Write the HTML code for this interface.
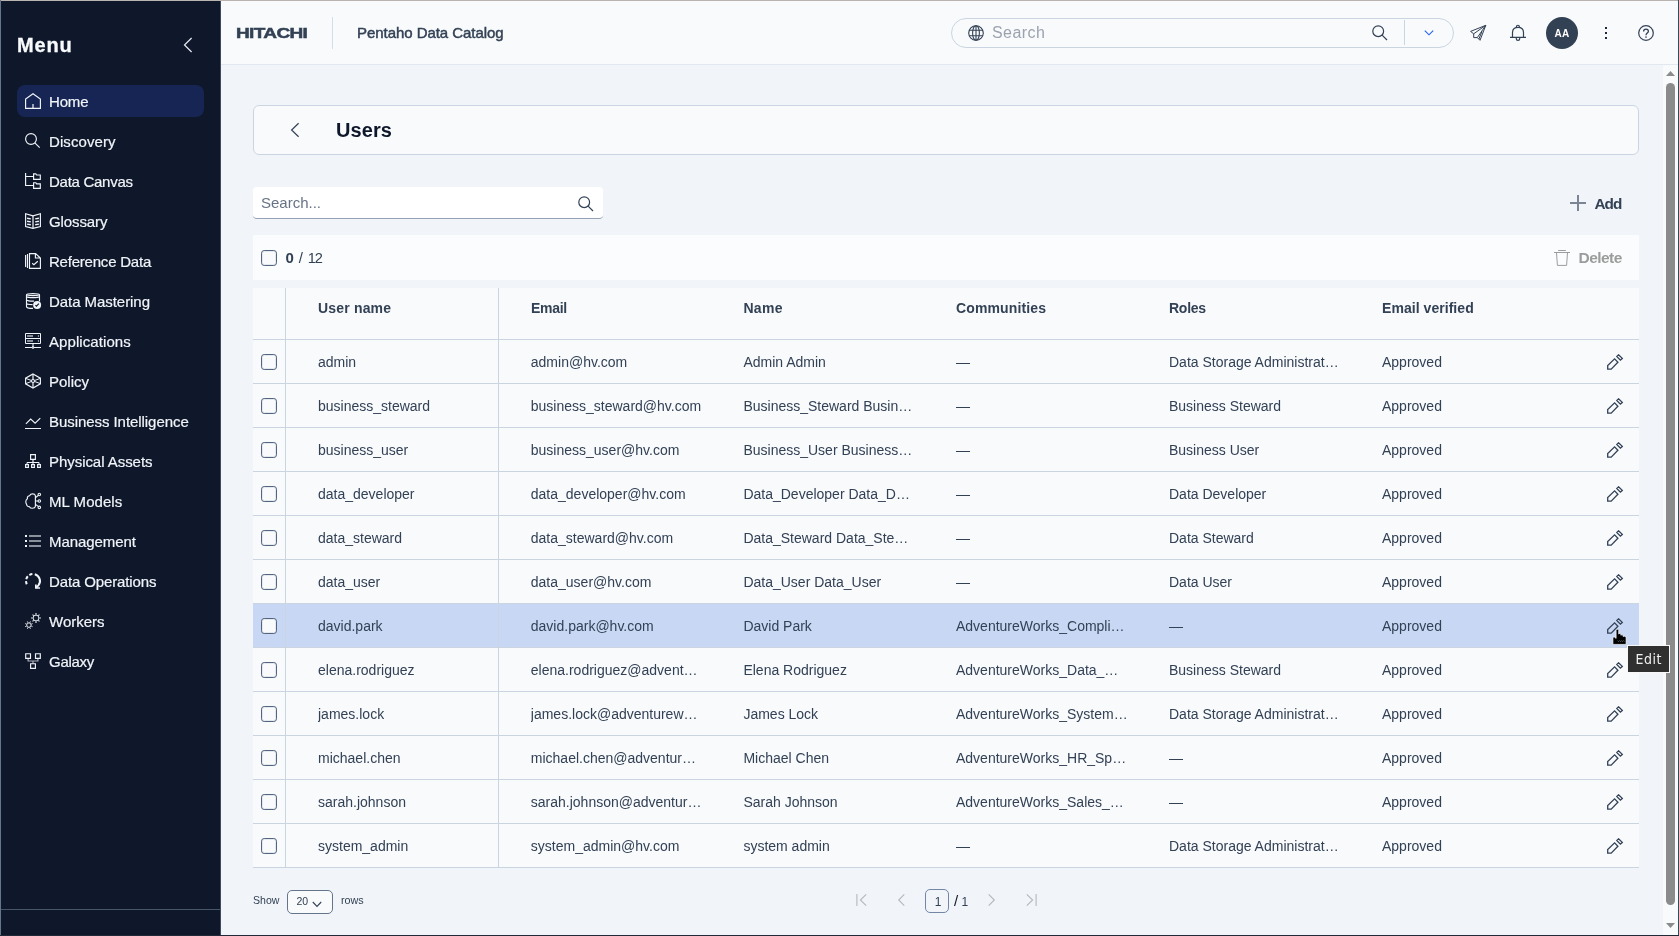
<!DOCTYPE html>
<html lang="en"><head><meta charset="utf-8"><title>Pentaho Data Catalog - Users</title>
<style>
*{box-sizing:border-box;margin:0;padding:0}
html,body{width:1679px;height:936px;overflow:hidden}
body{position:relative;will-change:transform;background:#f1f5f9;font-family:"Liberation Sans",sans-serif;color:#334155;font-size:14px}
.abs{position:absolute}
#side{position:absolute;z-index:2;left:0;top:0;width:220px;box-shadow:1px 0 0 #3d4a60;height:936px;background:#0f172a;color:#f1f5f9}
#menu{position:absolute;left:17px;top:31px;font-size:20px;font-weight:bold;color:#f8fafc;line-height:28px;letter-spacing:0.85px;-webkit-text-stroke:0.3px #f8fafc}
#collapse{position:absolute;left:180px;top:37px;color:#e2e8f0}
.nav{position:absolute;left:17px;width:187px;height:32px;border-radius:8px}
.nav.act{background:#172554}
.ni{position:absolute;left:8px;top:8px;width:16px;height:16px;color:#f1f5f9}
.ni svg{display:block;overflow:visible}
.nl{-webkit-text-stroke:0.2px #f1f5f9;position:absolute;left:32px;top:1px;line-height:32px;font-size:15px;color:#f1f5f9;white-space:nowrap}
#sideline{position:absolute;left:0;top:909px;width:220px;height:1px;background:#475569}
#top{position:absolute;left:220px;top:0;width:1459px;height:65px;background:#f8fafc;border-bottom:1px solid #e2e8f0}
#logo{position:absolute;left:16.3px;top:22px;font-size:14.8px;font-weight:bold;letter-spacing:-0.5px;color:#334155;line-height:22px;transform-origin:0 50%;transform:scaleX(1.285);-webkit-text-stroke:0.5px #334155}
#vdiv{position:absolute;left:112px;top:17px;width:1px;height:32px;background:#d5dde8}
#app{position:absolute;left:137px;top:22px;font-size:15px;line-height:22px;color:#334155;white-space:nowrap;letter-spacing:-0.05px;-webkit-text-stroke:0.45px #334155}
#gsearch{position:absolute;left:731px;top:18px;width:503px;height:30px;border:1px solid #cbd5e1;border-radius:15px;background:#f8fafc}
#gsearch .ph{position:absolute;left:40px;top:0;line-height:28px;font-size:16px;color:#9ca3af;letter-spacing:0.45px}
#gsearch .gl{position:absolute;left:16px;top:6px;color:#334155}
#gsearch .sr{position:absolute;left:420px;top:6px;color:#334155}
#gsearch .dv{position:absolute;left:452px;top:1px;width:1px;height:25px;background:#cbd5e1}
#gsearch .ch{position:absolute;left:472px;top:10px;color:#2563eb}
.ti{position:absolute;color:#334155}
.ti svg,.gl svg,.sr svg,.ch svg{display:block;overflow:visible}
#avatar{position:absolute;left:1326px;top:17px;width:32px;height:32px;border-radius:16px;background:#334155;color:#fff;font-size:10px;font-weight:bold;text-align:center;line-height:33px;letter-spacing:0.3px}
#scroll{position:absolute;left:1663px;top:65px;width:15px;height:870px;background:#f8fafc}
#thumb{position:absolute;left:3px;top:18px;width:9px;height:822px;border-radius:5px;background:#8b8b8b}
.arr{position:absolute;left:3px;width:9px;height:5px;display:block}
#card{position:absolute;left:253px;top:105px;width:1386px;height:50px;background:#f8fafc;border:1px solid #cbd5e1;border-radius:6px}
#card .bk{position:absolute;left:34px;top:16px;color:#334155}
#card h1{position:absolute;left:82px;top:10px;font-size:20px;line-height:28px;font-weight:bold;color:#0f172a;letter-spacing:0.1px}
#srch{position:absolute;left:253px;top:187px;width:350px;height:32px;background:#fff;border-radius:4px;border-bottom:1px solid #94a3b8;box-shadow:0 0 0 0 #0000}
#srch .ph{position:absolute;left:8px;top:0;line-height:31px;font-size:15px;color:#687385}
#srch .sr{position:absolute;left:325px;top:9px;color:#334155}
#add{position:absolute;left:1569px;top:194px;height:20px;color:#334155}
#add .pl{position:absolute;left:1px;top:1px;opacity:.62}
#add b{position:absolute;left:25.4px;top:-.3px;line-height:20px;font-size:15.3px;letter-spacing:-.9px;white-space:nowrap}
#bulk{position:absolute;left:253px;top:235px;width:1386px;height:45px;background:#fafcfd}
.cb{position:absolute;width:16px;height:16px;border:1px solid #52647f;box-shadow:inset 0 0 0 1px rgba(72,90,120,.1);border-radius:3.2px;background:#f8fafc}
#bulk .cb{left:8px;top:15px}
#bulk .cnt{position:absolute;left:32px;top:0;line-height:45px;font-size:15px;color:#334155;white-space:nowrap}
#del{position:absolute;left:1299px;top:0;height:44px;color:#9c9c9c}
#del svg{position:absolute;left:2px;top:15px}
#del b{position:absolute;left:26.5px;top:0;line-height:45px;font-size:15.5px;letter-spacing:-0.55px}
#thead{position:absolute;left:253px;top:288px;width:1386px;height:52px;background:#f8fafc;border-bottom:1px solid #cbd5e1}
#thead .h{position:absolute;top:10px;line-height:20px;font-weight:bold;font-size:14px;color:#334155;white-space:nowrap}
.vl{position:absolute;width:1px;background:#cbd5e1}
.row{position:absolute;left:253px;width:1386px;height:44px;background:#f8fafc;border-bottom:1px solid #cbd5e1}
.row.hl{background:#c8d8f4}
.ck{position:absolute;left:0;top:0;width:32px;height:44px}
.ck .cb{left:8px;top:14px}
.c{position:absolute;top:0;height:43px;line-height:44px;font-size:14px;color:#334155;white-space:nowrap;overflow:hidden}
.c0{left:65px}.c1{left:277.8px}.c2{left:490.4px}.c3{left:703px}.c4{left:916px}.c5{left:1129px}
.ed{position:absolute;left:1354px;top:14px;color:#334155}
.pen{display:block;overflow:visible}
#foot{position:absolute;left:253px;top:884px;width:1386px;height:32px;font-size:12px;color:#334155}
#foot .t{position:absolute;top:0;line-height:33px;white-space:nowrap;transform-origin:0 50%}
#sel{position:absolute;left:34px;top:6px;width:46px;height:24px;border:1px solid #64748b;border-radius:5px;background:#f8fafc}
#sel span{position:absolute;left:8.5px;top:0;line-height:21px;font-size:10.5px}
#sel svg{position:absolute;left:24px;top:9.5px}
#pg{position:absolute;left:672px;top:5px;width:24px;height:24px;border:1px solid #7386a6;border-radius:5px;background:#f1f5f9;text-align:center;line-height:24px;font-size:12px;padding-left:2px}
.pi{position:absolute;top:10px;color:#b4b8be}
.pi svg{display:block;overflow:visible}
#tip{position:absolute;left:1627px;top:645px;width:43px;height:28px;z-index:4;background:#303031;border:1px solid #f8f8f8;color:#f0f0f0;font-family:"DejaVu Sans",sans-serif;font-stretch:condensed;font-size:14px;line-height:26px;letter-spacing:.55px;text-indent:.5px;text-align:center}
#cursor{position:absolute;left:1612px;top:629px;z-index:4}
#frame-t{z-index:5;position:absolute;left:0;top:0;width:1679px;height:1px;background:#b9b4b0}
#frame-l{z-index:5;position:absolute;left:0;top:0;width:1px;height:936px;background:#66758c}
#frame-r{z-index:5;position:absolute;left:1678px;top:0;width:1px;height:936px;background:#3b4953}
#frame-b{z-index:5;position:absolute;left:0;top:935px;width:1679px;height:1px;background:#1f2937}

#bulk .cnt b{margin-left:.5px}#bulk .cnt .sl{font-style:normal;margin-left:.7px}#bulk .cnt .n12{font-style:normal;margin-left:.6px;letter-spacing:-1px;font-size:14.6px}

</style></head>
<body>
<div id="side">
<div id="menu">Menu</div>
<div id="collapse"><svg width="16" height="16" viewBox="0 0 16 16"><path d="M11.6 1 L4.5 8 L11.6 15" stroke="currentColor" stroke-width="1.25" fill="none"/></svg></div>
<div class="nav act" style="top:85px"><span class="ni"><svg width="16" height="16" viewBox="0 0 16 16" ><path stroke="currentColor" fill="none" stroke-width="1.15" stroke-width="1.2" d="M0.6 15.4 V6.1 L8 0.7 L15.4 6.1 V15.4 Z"/><path fill="currentColor" opacity="0.6" d="M7 11h2v4H7z"/></svg></span><span class="nl" style="letter-spacing:-0.173px">Home</span></div>
<div class="nav" style="top:125px"><span class="ni"><svg width="16" height="16" viewBox="0 0 16 16" ><circle stroke="currentColor" fill="none" stroke-width="1.15" cx="6" cy="6" r="5.4"/><path stroke="currentColor" fill="none" stroke-width="1.15" d="M9.8 9.8 L14.7 14.6"/></svg></span><span class="nl" style="letter-spacing:0.08px">Discovery</span></div>
<div class="nav" style="top:165px"><span class="ni"><svg width="16" height="16" viewBox="0 0 16 16" ><path stroke="currentColor" fill="none" stroke-width="1.15" stroke-width="1.3" d="M0.6 0 V12.5 H8.6 M0.6 3.5 H8.6 M8.6 0.8 H10.8 L11.6 2 H15.3 V6.3 H8.6 Z M8.6 9.7 H10.8 L11.6 10.9 H15.3 V15.3 H8.6 Z"/></svg></span><span class="nl" style="letter-spacing:-0.272px">Data Canvas</span></div>
<div class="nav" style="top:205px"><span class="ni"><svg width="16" height="16" viewBox="0 0 16 16" ><path stroke="currentColor" fill="none" stroke-width="1.15" stroke-width="1.2" d="M8 2.9 L0.6 0.8 V13.6 L8 15.4 L15.4 13.6 V0.8 Z"/><path fill="currentColor" opacity="0.6" d="M7 2.9h2v12.3H7z"/><path stroke="currentColor" stroke-width="1.4" fill="none" d="M2.1 5.2 L5.8 5.9 M2.1 8.2 L5.8 8.9 M2.1 11.1 L5.8 11.8 M13.9 5.2 L10.2 5.9 M13.9 8.2 L10.2 8.9 M13.9 11.1 L10.2 11.8"/></svg></span><span class="nl" style="letter-spacing:-0.099px">Glossary</span></div>
<div class="nav" style="top:245px"><span class="ni"><svg width="16" height="16" viewBox="0 0 16 16" ><path stroke="currentColor" fill="none" stroke-width="1.15" stroke-width="1.3" d="M0.6 2 V13.9 M2.5 1 V14.9 M4.5 0.6 H10.6 L15.4 5 V15.4 H4.5 Z M10.4 0.8 V5 H15.2"/><path stroke="currentColor" fill="none" stroke-width="1.15" stroke-width="1.2" d="M7.2 10.3 L8.9 11.8 L12.8 8.3"/></svg></span><span class="nl" style="letter-spacing:-0.216px">Reference Data</span></div>
<div class="nav" style="top:285px"><span class="ni"><svg width="16" height="16" viewBox="0 0 16 16" ><ellipse stroke="currentColor" fill="none" stroke-width="1.15" cx="8" cy="1.6" rx="6.5" ry="1"/><path stroke="currentColor" fill="none" stroke-width="1.15" stroke-width="1.2" d="M1.5 1.9 V13.4 C1.5 14.8 4.6 15.4 8 15.4 M14.5 1.9 V8.2 M1.5 3.7 C3.5 4.9 12.5 4.9 14.5 3.7 M1.5 6.6 C1.5 7.9 5 8.2 9 8.1 M1.5 10.2 C1.5 11.3 4.6 11.6 7.6 11.6"/><circle cx="12.1" cy="11.9" r="4" fill="currentColor"/><path stroke="#0f172a" stroke-width="1.1" fill="none" d="M10.4 12.2 L11.4 13.2 L13.9 10.6"/></svg></span><span class="nl" style="letter-spacing:-0.055px">Data Mastering</span></div>
<div class="nav" style="top:325px"><span class="ni"><svg width="16" height="16" viewBox="0 0 16 16" ><path stroke="currentColor" fill="none" stroke-width="1" d="M0.5 0.5 H15.5 V10.5 H0.5 Z M0.5 5.5 H15.5 M0 14.5 H16"/><path fill="currentColor" opacity="0.55" d="M2.1 2.1h5.9v1.8H2.1z M2.1 7.1h5.9v1.8H2.1z M12.9 2.1h1.1v1.8h-1.1z M12.9 7.1h1.1v1.8h-1.1z M7 11h2v3H7z"/><circle cx="8" cy="14.5" r="1.3" fill="currentColor"/><circle cx="8" cy="14.5" r="0.5" fill="#0f172a" opacity="0.4"/></svg></span><span class="nl" style="letter-spacing:0.078px">Applications</span></div>
<div class="nav" style="top:365px"><span class="ni"><svg width="16" height="16" viewBox="0 0 16 16" ><path fill="currentColor" opacity="0.6" d="M7 1.6h2v12.8H7z"/><path stroke="currentColor" fill="none" stroke-width="1.15" stroke-width="1.2" d="M8 0.9 L15.4 5.2 V10.8 L8 15.1 L0.6 10.8 V5.2 Z"/><path stroke="currentColor" stroke-width="1" fill="none" d="M0.8 5.4 L6.6 7.6 M0.8 10.6 L6.6 8.4 M15.2 5.4 L9.4 7.6 M15.2 10.6 L9.4 8.4"/><circle cx="8" cy="8" r="1.5" fill="#0f172a" stroke="currentColor" stroke-width="1.1"/></svg></span><span class="nl" style="letter-spacing:-0.004px">Policy</span></div>
<div class="nav" style="top:405px"><span class="ni"><svg width="16" height="16" viewBox="0 0 16 16" ><path stroke="currentColor" fill="none" stroke-width="1.15" stroke-width="1.2" d="M0.9 10.9 L5.7 6.1 L10.1 10.1 L15.3 5.1"/><path stroke="currentColor" stroke-width="1" d="M0 15.5 H16"/></svg></span><span class="nl" style="letter-spacing:-0.058px">Business Intelligence</span></div>
<div class="nav" style="top:445px"><span class="ni"><svg width="16" height="16" viewBox="0 0 16 16" ><path fill="currentColor" opacity="0.6" d="M7 7h2v2H7z"/><path stroke="currentColor" fill="none" stroke-width="1" d="M2 11 V9.5 H14 V11 M8 9.5 V11"/><path stroke="currentColor" fill="none" stroke-width="1.15" stroke-width="1.2" d="M5.6 1.6 H10.4 V6.4 H5.6 Z M0.6 11.6 H3.4 V14.4 H0.6 Z M6.6 11.6 H9.4 V14.4 H6.6 Z M12.6 11.6 H15.4 V14.4 H12.6 Z"/></svg></span><span class="nl" style="letter-spacing:-0.051px">Physical Assets</span></div>
<div class="nav" style="top:485px"><span class="ni"><svg width="16" height="16" viewBox="0 0 16 16" ><path stroke="currentColor" fill="none" stroke-width="1.15" d="M10.4 2.7 C9.8 0.3 5.6 0.3 4.6 2.7 C3 2.7 2 4.1 2.4 5.7 C0.6 6.7 0.3 9.6 1.6 11.3 C1.6 12.9 3 13.9 4.4 13.7 C5.4 15.7 9.8 15.9 10.4 13.3 Z M10.4 8 H13 M10.6 4.6 L13.2 2.5 M10.6 11.4 L13.2 13.4"/><circle stroke="currentColor" fill="none" stroke-width="1.15" cx="14.3" cy="1.5" r="1.25"/><circle stroke="currentColor" fill="none" stroke-width="1.15" cx="14.3" cy="8" r="1.25"/><circle stroke="currentColor" fill="none" stroke-width="1.15" cx="14.3" cy="14.4" r="1.25"/></svg></span><span class="nl" style="letter-spacing:0.055px">ML Models</span></div>
<div class="nav" style="top:525px"><span class="ni"><svg width="16" height="16" viewBox="0 0 16 16" ><path fill="currentColor" d="M0 2h2v2H0z M0 7h2v2H0z M0 12h2v2H0z"/><path fill="currentColor" opacity="0.55" d="M4 2h12v2H4z M4 7h12v2H4z M4 12h12v2H4z"/></svg></span><span class="nl" style="letter-spacing:-0.062px">Management</span></div>
<div class="nav" style="top:565px"><span class="ni"><svg width="16" height="16" viewBox="0 0 16 16" ><path stroke="currentColor" fill="none" stroke-width="2" d="M9.8 1.24 A7 7 0 0 1 13.4 12.4 L11.2 14.6"/><path stroke="currentColor" fill="none" stroke-width="2" stroke-dasharray="3.2 2" d="M7.39 1.03 A7 7 0 0 0 1.82 11.29"/><path fill="currentColor" d="M10 11.4h1.7v2.8H15v1.6H10z"/></svg></span><span class="nl" style="letter-spacing:-0.124px">Data Operations</span></div>
<div class="nav" style="top:605px"><span class="ni"><svg width="16" height="16" viewBox="0 0 16 16" ><circle stroke="currentColor" fill="none" stroke-width="0.95" cx="11" cy="5" r="2.9"/><path stroke="currentColor" stroke-width="1.1" d="M14.30 5.00 L15.90 5.00 M13.33 7.33 L14.46 8.46 M11.00 8.30 L11.00 9.90 M8.67 7.33 L7.54 8.46 M7.70 5.00 L6.10 5.00 M8.67 2.67 L7.54 1.54 M11.00 1.70 L11.00 0.10 M13.33 2.67 L14.46 1.54"/><circle stroke="currentColor" fill="none" stroke-width="0.95" cx="3.9" cy="12.1" r="2.2"/><path stroke="currentColor" stroke-width="1.0" d="M6.30 13.09 L7.50 13.59 M4.89 14.50 L5.39 15.70 M2.91 14.50 L2.41 15.70 M1.50 13.09 L0.30 13.59 M1.50 11.11 L0.30 10.61 M2.91 9.70 L2.41 8.50 M4.89 9.70 L5.39 8.50 M6.30 11.11 L7.50 10.61"/></svg></span><span class="nl" style="letter-spacing:-0.01px">Workers</span></div>
<div class="nav" style="top:645px"><span class="ni"><svg width="16" height="16" viewBox="0 0 16 16" ><path stroke="currentColor" fill="none" stroke-width="1.15" d="M0.7 0.7 H5.5 V5.3 H0.7 Z M10.5 0.7 H15.3 V5.3 H10.5 Z M5.6 10.7 H10.4 V15.3 H5.6 Z"/><path stroke="currentColor" fill="none" stroke-width="1.2" opacity="0.7" d="M3.1 5.3 V8 H12.9 V5.3 M8 8 V10.7"/></svg></span><span class="nl" style="letter-spacing:-0.288px">Galaxy</span></div>

<div id="sideline"></div>
</div>
<div id="top">
<div id="logo">HITACHI</div>
<div id="vdiv"></div>
<div id="app">Pentaho Data Catalog</div>
<div id="gsearch">
<span class="gl"><svg width="16" height="16" viewBox="0 0 16 16"><g stroke="currentColor" fill="none" stroke-width="1.1"><circle cx="8" cy="8" r="7.3"/><ellipse cx="8" cy="8" rx="3.4" ry="7.3"/><path d="M8 0.7 V15.3 M1.4 5.2 H14.6 M1.4 10.8 H14.6"/></g></svg></span>
<span class="ph">Search</span>
<span class="sr"><svg width="16" height="16" viewBox="0 0 16 16"><circle cx="6.2" cy="6.2" r="5.4" stroke="currentColor" fill="none" stroke-width="1.2"/><path d="M10.1 10.1 L15 15" stroke="currentColor" stroke-width="1.2"/></svg></span>
<span class="dv"></span>
<span class="ch"><svg width="10" height="8" viewBox="0 0 10 8"><path d="M0.8 1.6 L5 5.8 L9.2 1.6" stroke="currentColor" stroke-width="1.15" fill="none"/></svg></span>
</div>
<div class="ti" style="left:1250px;top:25px"><svg width="16" height="16" viewBox="0 0 16 16"><path d="M15.8 0.3 L0.6 6.4 L3.7 8.8 V12.6 H7.3 L10 15.3 Z M15.8 0.3 L3.7 8.8 M15.6 0.6 L7.3 12.6 M12 6.4 L8.9 14" stroke="currentColor" stroke-width="1" fill="none" stroke-linejoin="bevel"/></svg></div>
<div class="ti" style="left:1290px;top:25px"><svg width="16" height="17" viewBox="0 0 16 17"><path d="M0 12.3 H16 M2.5 12.3 V7.4 C2.5 3.9 5 2.3 8 2.3 S13.5 3.9 13.5 7.4 V12.3 M6.3 12.3 V13.7 C6.3 16 9.7 16 9.7 13.7 V12.3" stroke="currentColor" stroke-width="1.2" fill="none"/><ellipse cx="7.9" cy="1.4" rx="1.5" ry="1.1" stroke="currentColor" stroke-width="1.1" fill="none"/></svg></div>
<div id="avatar">AA</div>
<div class="ti" style="left:1384px;top:26px"><svg width="4" height="14" viewBox="0 0 4 14"><rect x="1" y="1" width="2" height="2" fill="#1e293b"/><rect x="1" y="6" width="2" height="2" fill="#1e293b"/><rect x="1" y="11" width="2" height="2" fill="#1e293b"/></svg></div>
<div class="ti" style="left:1418px;top:25px"><svg width="16" height="16" viewBox="0 0 16 16"><circle cx="8" cy="8" r="7.3" stroke="currentColor" stroke-width="1.2" fill="none"/><path d="M5.6 6.4 C5.6 3.4 10.4 3.4 10.4 6.2 C10.4 8 8 8 8 10.2" stroke="currentColor" stroke-width="1.3" fill="none"/><rect x="7.3" y="11.4" width="1.4" height="1.4" fill="currentColor"/></svg></div>
</div>
<div id="scroll"><svg class="arr" style="top:6px" width="9" height="5" viewBox="0 0 9 5"><path d="M0 5 L4.5 0 L9 5 Z" fill="#8b8b8b"/></svg><div id="thumb"></div><svg class="arr" style="top:858px" width="9" height="5" viewBox="0 0 9 5"><path d="M0 0 L4.5 5 L9 0 Z" fill="#8b8b8b"/></svg></div>
<div id="card"><span class="bk"><svg width="16" height="16" viewBox="0 0 16 16"><path d="M10.6 1.2 L3.6 8 L10.6 14.8" stroke="currentColor" stroke-width="1.2" fill="none"/></svg></span><h1>Users</h1></div>
<div id="srch"><span class="ph">Search...</span><span class="sr"><svg width="16" height="16" viewBox="0 0 16 16"><circle cx="6.2" cy="6.2" r="5.4" stroke="currentColor" fill="none" stroke-width="1.2"/><path d="M10.1 10.1 L15 15" stroke="currentColor" stroke-width="1.2"/></svg></span></div>
<div id="add"><span class="pl"><svg width="16" height="16" viewBox="0 0 16 16"><path d="M8 0 V16 M0 8 H16" stroke="currentColor" stroke-width="2"/></svg></span><b>Add</b></div>
<div id="bulk"><i class="cb"></i><span class="cnt"><b>0</b> <i class="sl">/</i> <i class="n12">12</i></span>
<div id="del"><svg width="16" height="16" viewBox="0 0 16 16"><path d="M0 2.5 H16 M4.2 0.5 H11.9 M2.5 2.5 L3.4 15.4 H12.6 L13.5 2.5" stroke="currentColor" stroke-width="1" fill="none"/></svg><b>Delete</b></div></div>
<div id="thead">
<span class="h" style="left:65px;letter-spacing:.18px">User name</span><span class="h" style="left:278px;letter-spacing:-.3px">Email</span><span class="h" style="left:490.4px;letter-spacing:.3px">Name</span><span class="h" style="left:703px;letter-spacing:.13px">Communities</span><span class="h" style="left:916px;letter-spacing:-.25px">Roles</span><span class="h" style="left:1129px;letter-spacing:.05px">Email verified</span>
</div>
<div class="row" style="top:340px"><div class="ck"><i class="cb"></i></div><div class="c c0"><span>admin</span></div><div class="c c1"><span>admin@hv.com</span></div><div class="c c2"><span>Admin Admin</span></div><div class="c c3"><span>—</span></div><div class="c c4"><span>Data Storage Administrat…</span></div><div class="c c5"><span>Approved</span></div><div class="ed"><svg class="pen" width="16" height="16" viewBox="0 0 16 16"><path stroke="currentColor" fill="none" stroke-width="1.3" stroke-linejoin="miter" d="M0.7 15.1 V11.6 L7.6 4.9 L10.9 8.2 L4.2 15.1 Z M11.5 0.8 L15.3 4.4 L13.4 6.1 L9.8 2.5 Z"/></svg></div></div>
<div class="row" style="top:384px"><div class="ck"><i class="cb"></i></div><div class="c c0"><span>business_steward</span></div><div class="c c1"><span>business_steward@hv.com</span></div><div class="c c2"><span>Business_Steward Busin…</span></div><div class="c c3"><span>—</span></div><div class="c c4"><span>Business Steward</span></div><div class="c c5"><span>Approved</span></div><div class="ed"><svg class="pen" width="16" height="16" viewBox="0 0 16 16"><path stroke="currentColor" fill="none" stroke-width="1.3" stroke-linejoin="miter" d="M0.7 15.1 V11.6 L7.6 4.9 L10.9 8.2 L4.2 15.1 Z M11.5 0.8 L15.3 4.4 L13.4 6.1 L9.8 2.5 Z"/></svg></div></div>
<div class="row" style="top:428px"><div class="ck"><i class="cb"></i></div><div class="c c0"><span>business_user</span></div><div class="c c1"><span>business_user@hv.com</span></div><div class="c c2"><span>Business_User Business…</span></div><div class="c c3"><span>—</span></div><div class="c c4"><span>Business User</span></div><div class="c c5"><span>Approved</span></div><div class="ed"><svg class="pen" width="16" height="16" viewBox="0 0 16 16"><path stroke="currentColor" fill="none" stroke-width="1.3" stroke-linejoin="miter" d="M0.7 15.1 V11.6 L7.6 4.9 L10.9 8.2 L4.2 15.1 Z M11.5 0.8 L15.3 4.4 L13.4 6.1 L9.8 2.5 Z"/></svg></div></div>
<div class="row" style="top:472px"><div class="ck"><i class="cb"></i></div><div class="c c0"><span>data_developer</span></div><div class="c c1"><span>data_developer@hv.com</span></div><div class="c c2"><span>Data_Developer Data_D…</span></div><div class="c c3"><span>—</span></div><div class="c c4"><span>Data Developer</span></div><div class="c c5"><span>Approved</span></div><div class="ed"><svg class="pen" width="16" height="16" viewBox="0 0 16 16"><path stroke="currentColor" fill="none" stroke-width="1.3" stroke-linejoin="miter" d="M0.7 15.1 V11.6 L7.6 4.9 L10.9 8.2 L4.2 15.1 Z M11.5 0.8 L15.3 4.4 L13.4 6.1 L9.8 2.5 Z"/></svg></div></div>
<div class="row" style="top:516px"><div class="ck"><i class="cb"></i></div><div class="c c0"><span>data_steward</span></div><div class="c c1"><span>data_steward@hv.com</span></div><div class="c c2"><span>Data_Steward Data_Ste…</span></div><div class="c c3"><span>—</span></div><div class="c c4"><span>Data Steward</span></div><div class="c c5"><span>Approved</span></div><div class="ed"><svg class="pen" width="16" height="16" viewBox="0 0 16 16"><path stroke="currentColor" fill="none" stroke-width="1.3" stroke-linejoin="miter" d="M0.7 15.1 V11.6 L7.6 4.9 L10.9 8.2 L4.2 15.1 Z M11.5 0.8 L15.3 4.4 L13.4 6.1 L9.8 2.5 Z"/></svg></div></div>
<div class="row" style="top:560px"><div class="ck"><i class="cb"></i></div><div class="c c0"><span>data_user</span></div><div class="c c1"><span>data_user@hv.com</span></div><div class="c c2"><span>Data_User Data_User</span></div><div class="c c3"><span>—</span></div><div class="c c4"><span>Data User</span></div><div class="c c5"><span>Approved</span></div><div class="ed"><svg class="pen" width="16" height="16" viewBox="0 0 16 16"><path stroke="currentColor" fill="none" stroke-width="1.3" stroke-linejoin="miter" d="M0.7 15.1 V11.6 L7.6 4.9 L10.9 8.2 L4.2 15.1 Z M11.5 0.8 L15.3 4.4 L13.4 6.1 L9.8 2.5 Z"/></svg></div></div>
<div class="row hl" style="top:604px"><div class="ck"><i class="cb"></i></div><div class="c c0"><span>david.park</span></div><div class="c c1"><span>david.park@hv.com</span></div><div class="c c2"><span>David Park</span></div><div class="c c3"><span>AdventureWorks_Compli…</span></div><div class="c c4"><span>—</span></div><div class="c c5"><span>Approved</span></div><div class="ed"><svg class="pen" width="16" height="16" viewBox="0 0 16 16"><path stroke="currentColor" fill="none" stroke-width="1.3" stroke-linejoin="miter" d="M0.7 15.1 V11.6 L7.6 4.9 L10.9 8.2 L4.2 15.1 Z M11.5 0.8 L15.3 4.4 L13.4 6.1 L9.8 2.5 Z"/></svg></div></div>
<div class="row" style="top:648px"><div class="ck"><i class="cb"></i></div><div class="c c0"><span>elena.rodriguez</span></div><div class="c c1"><span>elena.rodriguez@advent…</span></div><div class="c c2"><span>Elena Rodriguez</span></div><div class="c c3"><span>AdventureWorks_Data_…</span></div><div class="c c4"><span>Business Steward</span></div><div class="c c5"><span>Approved</span></div><div class="ed"><svg class="pen" width="16" height="16" viewBox="0 0 16 16"><path stroke="currentColor" fill="none" stroke-width="1.3" stroke-linejoin="miter" d="M0.7 15.1 V11.6 L7.6 4.9 L10.9 8.2 L4.2 15.1 Z M11.5 0.8 L15.3 4.4 L13.4 6.1 L9.8 2.5 Z"/></svg></div></div>
<div class="row" style="top:692px"><div class="ck"><i class="cb"></i></div><div class="c c0"><span>james.lock</span></div><div class="c c1"><span>james.lock@adventurew…</span></div><div class="c c2"><span>James Lock</span></div><div class="c c3"><span>AdventureWorks_System…</span></div><div class="c c4"><span>Data Storage Administrat…</span></div><div class="c c5"><span>Approved</span></div><div class="ed"><svg class="pen" width="16" height="16" viewBox="0 0 16 16"><path stroke="currentColor" fill="none" stroke-width="1.3" stroke-linejoin="miter" d="M0.7 15.1 V11.6 L7.6 4.9 L10.9 8.2 L4.2 15.1 Z M11.5 0.8 L15.3 4.4 L13.4 6.1 L9.8 2.5 Z"/></svg></div></div>
<div class="row" style="top:736px"><div class="ck"><i class="cb"></i></div><div class="c c0"><span>michael.chen</span></div><div class="c c1"><span>michael.chen@adventur…</span></div><div class="c c2"><span>Michael Chen</span></div><div class="c c3"><span>AdventureWorks_HR_Sp…</span></div><div class="c c4"><span>—</span></div><div class="c c5"><span>Approved</span></div><div class="ed"><svg class="pen" width="16" height="16" viewBox="0 0 16 16"><path stroke="currentColor" fill="none" stroke-width="1.3" stroke-linejoin="miter" d="M0.7 15.1 V11.6 L7.6 4.9 L10.9 8.2 L4.2 15.1 Z M11.5 0.8 L15.3 4.4 L13.4 6.1 L9.8 2.5 Z"/></svg></div></div>
<div class="row" style="top:780px"><div class="ck"><i class="cb"></i></div><div class="c c0"><span>sarah.johnson</span></div><div class="c c1"><span>sarah.johnson@adventur…</span></div><div class="c c2"><span>Sarah Johnson</span></div><div class="c c3"><span>AdventureWorks_Sales_…</span></div><div class="c c4"><span>—</span></div><div class="c c5"><span>Approved</span></div><div class="ed"><svg class="pen" width="16" height="16" viewBox="0 0 16 16"><path stroke="currentColor" fill="none" stroke-width="1.3" stroke-linejoin="miter" d="M0.7 15.1 V11.6 L7.6 4.9 L10.9 8.2 L4.2 15.1 Z M11.5 0.8 L15.3 4.4 L13.4 6.1 L9.8 2.5 Z"/></svg></div></div>
<div class="row" style="top:824px"><div class="ck"><i class="cb"></i></div><div class="c c0"><span>system_admin</span></div><div class="c c1"><span>system_admin@hv.com</span></div><div class="c c2"><span>system admin</span></div><div class="c c3"><span>—</span></div><div class="c c4"><span>Data Storage Administrat…</span></div><div class="c c5"><span>Approved</span></div><div class="ed"><svg class="pen" width="16" height="16" viewBox="0 0 16 16"><path stroke="currentColor" fill="none" stroke-width="1.3" stroke-linejoin="miter" d="M0.7 15.1 V11.6 L7.6 4.9 L10.9 8.2 L4.2 15.1 Z M11.5 0.8 L15.3 4.4 L13.4 6.1 L9.8 2.5 Z"/></svg></div></div>

<div class="vl" style="left:285px;top:288px;height:580px"></div>
<div class="vl" style="left:498px;top:288px;height:580px"></div>
<div id="foot">
<span class="t" style="left:0;top:-.8px;font-size:11.6px;transform:scaleX(.91)">Show</span>
<div id="sel"><span>20</span><svg width="10" height="7" viewBox="0 0 10 7"><path d="M0.8 1 L5 5.4 L9.2 1" stroke="#334155" stroke-width="1.1" fill="none"/></svg></div>
<span class="t" style="left:87.5px;top:-.8px;font-size:11.6px;transform:scaleX(.93)">rows</span>
<span class="pi" style="left:603px"><svg width="11" height="12" viewBox="0 0 11 12"><path d="M0.9 0 V12 M10.2 0.4 L4.4 6 L10.2 11.6" stroke="currentColor" stroke-width="1.1" fill="none"/></svg></span>
<span class="pi" style="left:645px"><svg width="7" height="12" viewBox="0 0 7 12"><path d="M6.3 0.4 L0.7 6 L6.3 11.6" stroke="currentColor" stroke-width="1.1" fill="none"/></svg></span>
<div id="pg">1</div>
<span class="t" style="left:701px;font-size:12px"><span style="font-size:15px;color:#0f172a">/</span> 1</span>
<span class="pi" style="left:735px"><svg width="7" height="12" viewBox="0 0 7 12"><path d="M0.7 0.4 L6.3 6 L0.7 11.6" stroke="currentColor" stroke-width="1.1" fill="none"/></svg></span>
<span class="pi" style="left:773px"><svg width="11" height="12" viewBox="0 0 11 12"><path d="M10.1 0 V12 M0.8 0.4 L6.6 6 L0.8 11.6" stroke="currentColor" stroke-width="1.1" fill="none"/></svg></span>
</div>
<div id="tip">Edit</div>
<div id="cursor"><svg width="16" height="17" viewBox="0 0 16 17"><path d="M4.1 1.4 C4.1 -0.1 6.7 -0.1 6.7 1.4 V5 C7.2 4 8.9 4.3 8.9 5.6 V6.3 C9.6 5.4 11.2 5.8 11.2 7 V7.6 C12 6.7 14.1 7.1 14.1 8.7 V15.4 H0.9 V9 C0.9 7.7 2.7 7.7 3.1 8.6 L4.1 9.4 Z" fill="#000" stroke="#fff" stroke-width="0.7"/><path d="M5.6 11.6 L6.6 12.6 L7.6 11.6 L8.6 12.6 L9.6 11.6 L10.6 12.6 L11.6 11.6 L12.4 12.4" stroke="#9aa" stroke-width="0.5" fill="none"/></svg></div>
<div id="frame-t"></div><div id="frame-l"></div><div id="frame-r"></div><div id="frame-b"></div>

</body></html>
